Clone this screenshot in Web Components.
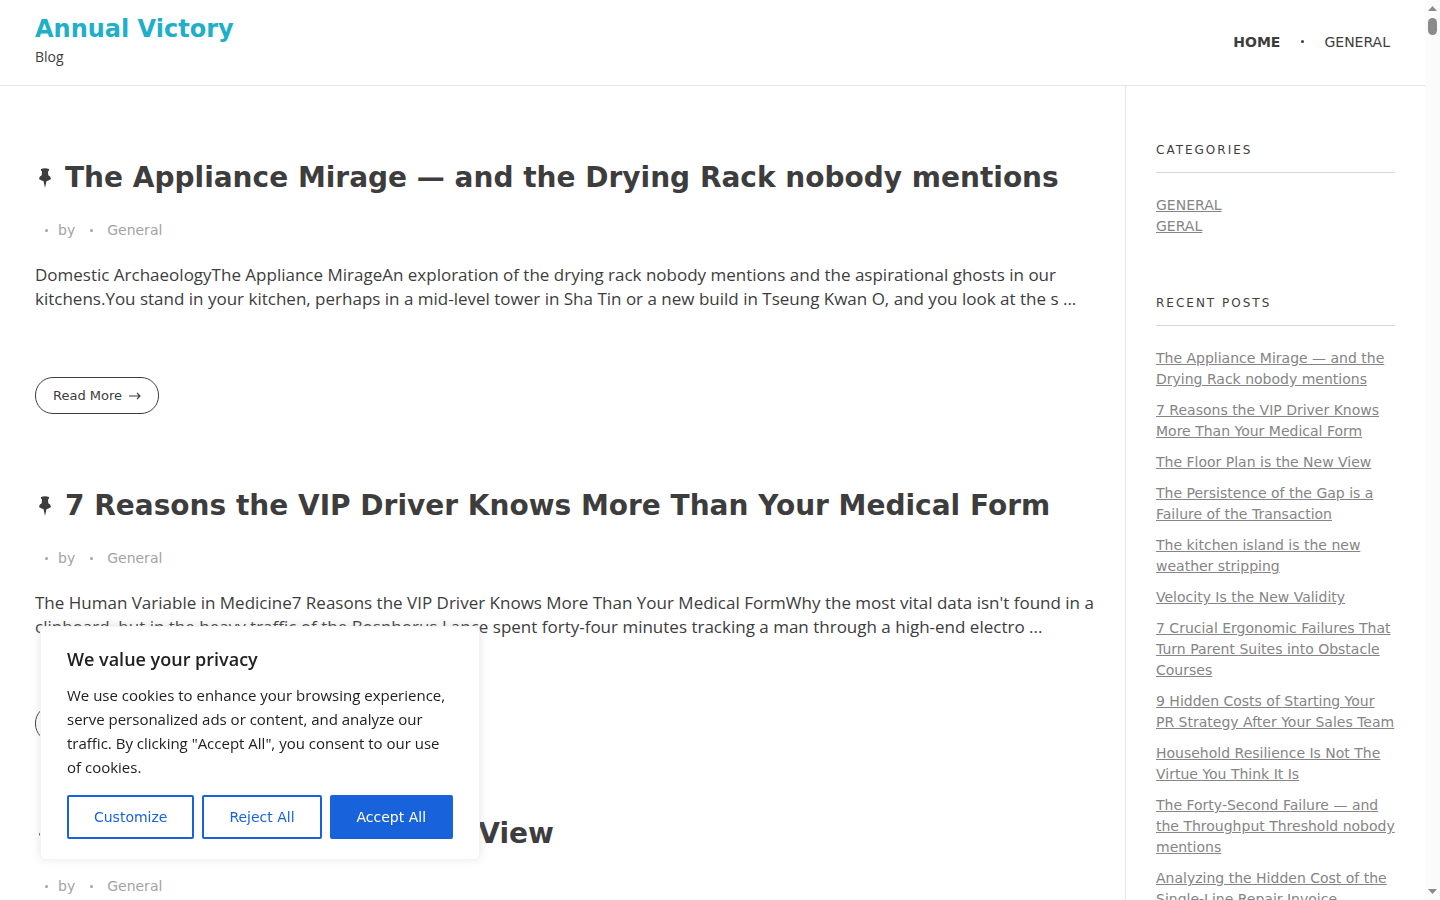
<!DOCTYPE html>
<html lang="en">
<head>
<meta charset="utf-8">
<meta name="viewport" content="width=device-width, initial-scale=1">
<title>Annual Victory</title>
<style>
  html, body { height: 100%; margin: 0; }
  body {
    --ink: #3d3d3d;
    --muted: #a3a3a3;
    --line: #e6e6e6;
    --ui: "DejaVu Sans", Verdana, sans-serif;
    --copy: "Open Sans", "Noto Sans", sans-serif;
    background: #fff;
    color: var(--ink);
    font-family: var(--ui);
    overflow: hidden;
  }
</style>
</head>
<body>
<blog-shell>
  <site-header slot="header" name="Annual Victory" tagline="Blog">
    <nav-item href="#home" current>HOME</nav-item>
    <nav-item href="#general">GENERAL</nav-item>
  </site-header>

  <post-card heading="The Appliance Mirage — and the Drying Rack nobody mentions" category="General">Domestic ArchaeologyThe Appliance MirageAn exploration of the drying rack nobody mentions and the aspirational ghosts in our kitchens.You stand in your kitchen, perhaps in a mid-level tower in Sha Tin or a new build in Tseung Kwan O, and you look at the s ...</post-card>
  <post-card heading="7 Reasons the VIP Driver Knows More Than Your Medical Form" category="General">The Human Variable in Medicine7 Reasons the VIP Driver Knows More Than Your Medical FormWhy the most vital data isn't found in a clipboard, but in the heavy traffic of the Bosphorus.Lance spent forty-four minutes tracking a man through a high-end electro ...</post-card>
  <post-card heading="The Floor Plan is the New View" category="General"></post-card>

  <side-widget slot="sidebar" heading="CATEGORIES" compact>
    <side-link href="#general">GENERAL</side-link>
    <side-link href="#geral">GERAL</side-link>
  </side-widget>
  <side-widget slot="sidebar" heading="RECENT POSTS">
    <side-link href="#p1">The Appliance Mirage — and the Drying Rack nobody mentions</side-link>
    <side-link href="#p2">7 Reasons the VIP Driver Knows More Than Your Medical Form</side-link>
    <side-link href="#p3">The Floor Plan is the New View</side-link>
    <side-link href="#p4">The Persistence of the Gap is a Failure of the Transaction</side-link>
    <side-link href="#p5">The kitchen island is the new weather stripping</side-link>
    <side-link href="#p6">Velocity Is the New Validity</side-link>
    <side-link href="#p7">7 Crucial Ergonomic Failures That Turn Parent Suites into Obstacle Courses</side-link>
    <side-link href="#p8">9 Hidden Costs of Starting Your PR Strategy After Your Sales Team</side-link>
    <side-link href="#p9">Household Resilience Is Not The Virtue You Think It Is</side-link>
    <side-link href="#p10">The Forty-Second Failure — and the Throughput Threshold nobody mentions</side-link>
    <side-link href="#p11">Analyzing the Hidden Cost of the Single-Line Repair Invoice</side-link>
  </side-widget>
</blog-shell>

<cookie-notice heading="We value your privacy">
  We use cookies to enhance your browsing experience, serve personalized ads or content, and analyze our traffic. By clicking "Accept All", you consent to our use of cookies.
  <notice-button slot="actions">Customize</notice-button>
  <notice-button slot="actions">Reject All</notice-button>
  <notice-button slot="actions" primary>Accept All</notice-button>
</cookie-notice>

<script>
class Base extends HTMLElement {
  constructor() {
    super();
    this.attachShadow({ mode: 'open' });
  }
  connectedCallback() {
    this.shadowRoot.innerHTML = this.render();
  }
  attr(name) { return this.getAttribute(name) || ''; }
}

customElements.define('blog-shell', class extends Base {
  render() {
    return `<style>
      :host { display: flex; height: 100%; }
      .page { flex: 1; min-width: 0; overflow: hidden; }
      .columns { display: flex; align-items: stretch; }
      main { flex: 1; min-width: 0; padding: 0 24px 0 35px; }
      aside { box-sizing: border-box; width: 300px; padding: 54px 30px; border-left: 1px solid var(--line); }
    </style>
    <div class="page">
      <slot name="header"></slot>
      <div class="columns">
        <main><slot></slot></main>
        <aside><slot name="sidebar"></slot></aside>
      </div>
    </div>
    <scroll-track></scroll-track>`;
  }
});

customElements.define('scroll-track', class extends Base {
  render() {
    return `<style>
      :host { display: flex; flex-direction: column; align-items: center; box-sizing: border-box; width: 15px; padding: 6px 0; background: #fbfbfb; }
      svg { display: block; width: 9px; height: 5px; fill: #8b8b8b; }
      i { width: 9px; height: 17px; margin: 7px 0 auto; border-radius: 5px; background: #8b8b8b; }
    </style>
    <svg viewBox="0 0 9 5" aria-hidden="true"><path d="M0 5 4.500 0 9 5z"/></svg>
    <i></i>
    <svg viewBox="0 0 9 5" aria-hidden="true"><path d="M0 0h9L4.500 5z"/></svg>`;
  }
});

customElements.define('site-header', class extends Base {
  render() {
    return `<style>
      :host { display: block; border-bottom: 1px solid var(--line); }
      header { display: flex; justify-content: space-between; align-items: center; padding: 13px 35px 15px; }
      .name { display: block; font-size: 24px; line-height: 32px; font-weight: 700; color: #20afc8; text-decoration: none; }
      .tag { margin: 2px 0 3px; font: 14px/20px var(--copy); }
      nav { display: flex; }
    </style>
    <header>
      <div>
        <a class="name" href="#home">${this.attr('name')}</a>
        <p class="tag">${this.attr('tagline')}</p>
      </div>
      <nav><slot></slot></nav>
    </header>`;
  }
});

customElements.define('nav-item', class extends Base {
  render() {
    return `<style>
      :host { display: flex; align-items: center; }
      :host(:not(:first-of-type))::before { content: ""; width: 3px; height: 3px; margin: 0 20px 0 21px; border-radius: 50%; background: var(--ink); }
      a { font-size: 14px; line-height: 24px; color: var(--ink); text-decoration: none; }
      :host([current]) a { font-weight: 700; }
    </style>
    <a href="${this.attr('href')}"><slot></slot></a>`;
  }
});

customElements.define('post-card', class extends Base {
  render() {
    return `<style>
      :host { display: block; padding-top: 74px; }
      h2 { display: flex; align-items: center; margin: 0; font-size: 28px; line-height: 36px; font-weight: 700; }
      h2 svg { flex: none; width: 12px; height: 20px; margin: 0 14px 0 4px; fill: var(--ink); }
      h2 a { color: inherit; text-decoration: none; }
      .meta { display: flex; align-items: center; margin: 24px 0 23px; padding-left: 10px; font-size: 14px; line-height: 20px; color: var(--muted); }
      .meta i { width: 3px; height: 3px; border-radius: 50%; background: var(--muted); }
      .meta span { margin: 0 15px 0 10px; }
      .meta a { margin-left: 14px; color: inherit; text-decoration: none; }
      .excerpt { min-height: 48px; margin: 0 0 66px; font: 17px/24px var(--copy); }
      .more { display: inline-flex; align-items: center; gap: 7px; padding: 0 17px; border: 1px solid var(--ink); border-radius: 18px; font-size: 13px; line-height: 35px; color: var(--ink); text-decoration: none; vertical-align: top; }
      .more svg { width: 12px; height: 8px; fill: none; stroke: currentColor; stroke-width: 1.1; }
    </style>
    <article>
      <h2>
        <svg viewBox="0 0 12 20" aria-hidden="true"><path d="M2 1Q6-.6 10 1q.5 1.600-1 2.500l.3 3.700Q12 8.500 12 11 9 13.300 6 13.300T0 11Q0 8.500 2.700 7.200L3 3.500Q1.500 2.600 2 1z"/><path d="M4.500 13h3L6 20z"/></svg>
        <a href="#post">${this.attr('heading')}</a>
      </h2>
      <div class="meta"><i></i><span>by</span><i></i><a href="#category">${this.attr('category')}</a></div>
      <p class="excerpt"><slot></slot></p>
      <a class="more" href="#post">Read More <svg viewBox="0 0 12 8" aria-hidden="true"><path d="M0 4h11M8 1l3 3-3 3"/></svg></a>
    </article>`;
  }
});

customElements.define('side-widget', class extends Base {
  render() {
    return `<style>
      :host { display: block; --gap: 10px; margin-bottom: 56px; }
      :host([compact]) { --gap: 0px; }
      h3 { margin: 0 0 22px; padding-bottom: 11px; border-bottom: 1px solid #d6d6d6; font-size: 12px; line-height: 21px; font-weight: 400; letter-spacing: 2px; }
      div { display: flex; flex-direction: column; gap: var(--gap); }
    </style>
    <h3>${this.attr('heading')}</h3>
    <div><slot></slot></div>`;
  }
});

customElements.define('side-link', class extends Base {
  render() {
    return `<style>
      :host { display: block; font-size: 14px; line-height: 21px; }
      a { color: #858585; text-decoration: underline; }
    </style>
    <a href="${this.attr('href')}"><slot></slot></a>`;
  }
});

customElements.define('cookie-notice', class extends Base {
  render() {
    return `<style>
      :host { display: block; position: fixed; left: 40px; bottom: 40px; z-index: 10; box-sizing: border-box; width: 440px; max-width: calc(100% - 80px); padding: 20px 26px; border: 1px solid #f4f4f4; border-radius: 6px; background: #fff; box-shadow: 0 -1px 10px rgba(172, 171, 171, .3); color: #212121; }
      h2 { margin: 0 0 12px; font: 600 18px/24px var(--copy); }
      p { margin: 0 0 16px; font: 15px/24px var(--copy); }
      .actions { display: flex; gap: 8px; }
    </style>
    <h2>${this.attr('heading')}</h2>
    <p><slot></slot></p>
    <div class="actions"><slot name="actions"></slot></div>`;
  }
});

customElements.define('notice-button', class extends Base {
  render() {
    return `<style>
      :host { display: block; flex: 1 1 auto; }
      button { width: 100%; padding: 8px 24px; border: 2px solid #1863dc; border-radius: 2px; background: transparent; color: #1863dc; font: 14px/24px var(--ui); white-space: nowrap; cursor: pointer; }
      :host([primary]) button { background: #1863dc; color: #fff; }
    </style>
    <button type="button"><slot></slot></button>`;
  }
});
</script>
</body>
</html>
